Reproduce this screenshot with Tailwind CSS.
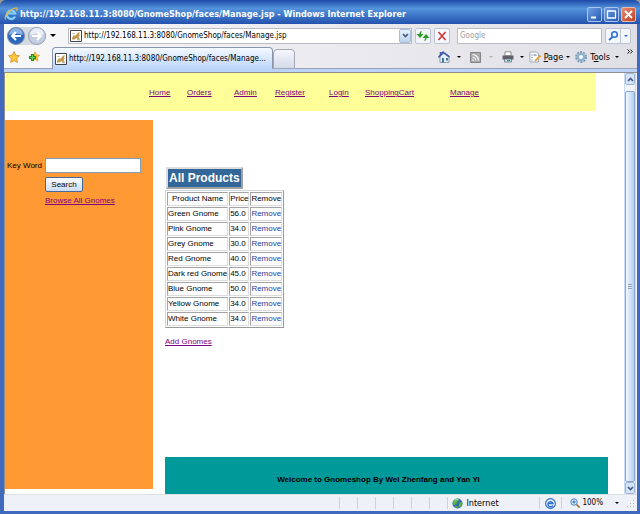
<!DOCTYPE html>
<html lang="en">
<head>
<meta charset="utf-8">
<title>GnomeShop - Manage</title>
<script src="https://cdn.jsdelivr.net/npm/@tailwindcss/browser@4"></script>
</head>
<body class="bg-[#9a9a90]">
<svg class="hidden" aria-hidden="true">
  <symbol id="gnome" viewBox="0 0 12 12">
    <path d="M.5.5h11v11H.5z" fill="#fff" stroke="#444"/>
    <path d="M2 8l2-3 1 1 4-4 .8.8-1 1.7L10 5 8.500 7 10 9.500H8L6.500 8 4.500 9.500H2.200z" fill="#c49848"/>
    <path d="M2.500 3.500h2M7 9.800h3" stroke="#a8a090" stroke-width=".8"/>
  </symbol>
  <symbol id="caret" viewBox="0 0 6 3"><path d="M0 0h6L3 3z" fill="currentColor"/></symbol>
  <symbol id="globe" viewBox="0 0 12 12">
    <circle cx="6" cy="6" r="5.500" fill="#3a68b8"/>
    <path d="M1 4Q3 .6 6.500.8L7.500 3 5 4.500 5.500 6 3 7.500 1 7zM8 5l3-1 .4 2.500L9 10 7 9.500zM3 9l2.500-.6L6 11 4 10.700z" fill="#55b545"/>
    <path d="M3 2.500Q5 1 7 2" stroke="#cdeec4" fill="none"/>
  </symbol>
</svg>
<div class="flex h-screen flex-col overflow-hidden rounded-t-md bg-[#4169bd] font-['DejaVu_Sans_Condensed','DejaVu_Sans',sans-serif] text-[9px] leading-3 text-black">
  <!-- Title bar -->
  <header class="flex h-6 shrink-0 items-center bg-linear-to-b from-[#1d49a6] via-[#5593dc] via-35% to-[#2452ae] px-1 pt-1">
    <svg class="h-3.5 w-3.5 shrink-0" viewBox="0 0 14 14">
      <path d="M11 9.500A4.200 4.200 0 1 1 11.200 6.500H4.500" fill="none" stroke="#83d3f8" stroke-width="2.200"/>
      <path d="M1.800 12.500Q-.2 10 4 5.500T12.500 1Q14 1.800 12.500 4" fill="none" stroke="#f2b632" stroke-width="1.200"/>
    </svg>
    <h1 class="ml-0.5 flex-1 truncate text-[9px] font-bold leading-4 text-white">http://192.168.11.3:8080/GnomeShop/faces/Manage.jsp - Windows Internet Explorer</h1>
    <div class="flex gap-0.5">
      <button aria-label="Minimize" class="h-[15px] w-[15px] rounded-xs border border-[#a9c5ee] bg-linear-to-br from-[#6f9ee2] to-[#2758b3]"><svg viewBox="0 0 13 13"><path d="M3 9.500h5" stroke="#fff" stroke-width="2"/></svg></button>
      <button aria-label="Maximize" class="h-[15px] w-[15px] rounded-xs border border-[#a9c5ee] bg-linear-to-br from-[#6f9ee2] to-[#2758b3]"><svg viewBox="0 0 13 13"><path d="M2.500 3v7h8V3M2 3h9" fill="none" stroke="#fff" stroke-width="1.300"/></svg></button>
      <button aria-label="Close" class="h-[15px] w-[15px] rounded-xs border border-[#e9b9ae] bg-linear-to-br from-[#e38a70] to-[#c0401c]"><svg viewBox="0 0 13 13"><path d="M3 3l7 7M10 3l-7 7" stroke="#fff" stroke-width="1.800"/></svg></button>
    </div>
  </header>
  <div class="mr-[3px] mb-[3px] ml-1 flex min-h-0 flex-1 flex-col bg-white">
    <!-- Navigation row -->
    <div class="flex h-[23px] shrink-0 items-center bg-linear-to-r from-[#f8f8f9] to-[#dfdfe6] pr-1.5 pl-[3px]">
      <div class="flex h-[18px] items-center gap-[3px] rounded-full bg-[#d5d9e2]">
        <button aria-label="Back" class="h-[18px] w-[18px]"><svg viewBox="0 0 18 18"><circle cx="9" cy="9" r="8.500" fill="#2b67bd" stroke="#8090ae"/><path d="M2 8a7 7 0 0 1 14 0q-7-3-14 0" fill="#8eb3e5"/><path d="M14 9H5m4-4L5 9l4 4" fill="none" stroke="#fff" stroke-width="2"/></svg></button>
        <button aria-label="Forward" class="h-[18px] w-[18px]"><svg viewBox="0 0 18 18"><circle cx="9" cy="9" r="8.500" fill="#c3cfe0" stroke="#949fb5"/><path d="M2 8a7 7 0 0 1 14 0q-7-3-14 0" fill="#e9eef6"/><path d="M4 9h9M9 5l4 4-4 4" fill="none" stroke="#fff" stroke-width="2"/></svg></button>
      </div>
      <button aria-label="Recent pages" class="ml-1 w-[6px]"><svg class="h-[3px] w-[6px]"><use href="#caret"/></svg></button>
      <form class="ml-3 flex h-4 flex-1 items-center border border-[#b9bcc4] bg-white pl-px">
        <svg class="h-3 w-3 shrink-0"><use href="#gnome"/></svg>
        <input aria-label="Address" value="http://192.168.11.3:8080/GnomeShop/faces/Manage.jsp" class="ml-0.5 min-w-0 flex-1 text-[8px] outline-none">
        <button type="button" aria-label="Address history" class="flex h-[14px] w-3 items-center justify-center rounded-xs border border-[#a8bedb] bg-linear-to-b from-[#e8f2fd] to-[#bcd2ef]"><svg class="h-[5px] w-[7px]" viewBox="0 0 7 5"><path d="M1 1l2.500 2.500L6 1" fill="none" stroke="#465a7d" stroke-width="1.700"/></svg></button>
      </form>
      <button aria-label="Refresh" class="ml-[3px] h-4 w-4 rounded-xs border border-[#bcc3d2] bg-[#f3f6fa]"><svg viewBox="0 0 14 14"><path d="M5.500 2.500Q4 3 4 5v2M1.800 5.500L4 8l2.200-2.500zM8.500 11.500q1.500-.5 1.500-2.500V7M7.800 8.500L10 6l2.200 2.500z" fill="#2d9b25" fill-rule="evenodd" stroke="#2d9b25" stroke-width="1.200"/></svg></button>
      <button aria-label="Stop" class="ml-[3px] h-4 w-4 rounded-xs border border-[#bcc3d2] bg-[#f3f6fa]"><svg viewBox="0 0 14 14"><path d="M3.500 3l7 8M10.500 3l-7 8" stroke="#d13536" stroke-width="1.600"/></svg></button>
      <input aria-label="Web search" placeholder="Google" class="ml-[7px] h-4 w-[145px] border border-[#b9bcc4] bg-white px-0.5 text-[8px] outline-none placeholder:text-[#9d9d9d]">
      <div class="ml-[3px] flex h-4 w-[26px] rounded-xs border border-[#bcc3d2] bg-[#f3f6fa]">
        <button aria-label="Run search" class="flex-1 border-r border-[#bcc3d2]"><svg class="h-[14px] w-[14px]" viewBox="0 0 14 14"><circle cx="8.500" cy="5.500" r="2.800" fill="#eef7ff" stroke="#2c6cd8" stroke-width="1.500"/><path d="M6.500 8L3 11" stroke="#2c6cd8" stroke-width="1.800"/></svg></button>
        <button aria-label="Search options" class="flex w-[9px] items-center justify-center text-[#2a6ade]"><svg class="h-[2px] w-1"><use href="#caret"/></svg></button>
      </div>
    </div>
    <!-- Tab row and command bar -->
    <div class="flex h-[22px] shrink-0 items-end bg-linear-to-r from-[#f8f8f9] to-[#dfdfe6]">
      <div class="flex h-full w-12 items-center gap-2 border-b border-[#9ca3b2] pb-0.5 pl-1">
        <button aria-label="Favorites" class="w-3"><svg viewBox="0 0 12 12"><path d="M6 .6l1.700 3.600 3.800.6-2.800 2.700.7 4L6 9.500l-3.400 2 .7-4L.5 4.800l3.800-.6z" fill="#fdc53a" stroke="#cf8d1f" stroke-width=".8"/></svg></button>
        <button aria-label="Add to favorites" class="w-3"><svg viewBox="0 0 12 12"><path d="M7 .8l1.400 3 3.200.5-2.300 2.300.5 3.300L7 8.400 4 10z" fill="#fdc53a" stroke="#d99a2b" stroke-width=".7"/><path d="M4.500 3v7M1 6.500h7" stroke="#238b22" stroke-width="3.200"/><path d="M4.500 4v5M2 6.500h5" stroke="#69cf5c" stroke-width="1.200"/></svg></button>
      </div>
      <div class="flex h-[22px] w-[221px] items-center gap-0.5 rounded-t-sm border border-b-0 border-[#8b96ab] bg-linear-to-b from-[#f4f9ff] to-[#bcd6fa] pr-1 pl-0.5 text-[8px]">
        <svg class="h-3 w-3 shrink-0"><use href="#gnome"/></svg>
        <span class="whitespace-nowrap">http://192.168.11.3:8080/GnomeShop/faces/Manage...</span>
      </div>
      <button aria-label="New tab" class="h-5 w-[22px] rounded-t-sm border border-[#a0a6b6] bg-linear-to-b from-[#f5f7fd] to-[#d5daea]"></button>
      <div class="flex h-full flex-1 items-center justify-end border-b border-[#9ca3b2] pb-px">
        <button aria-label="Home" class="mr-[7px] w-3"><svg viewBox="0 0 12 12"><path d="M2 5.500L6.500 2 11 5.500v6H2z" fill="#e6edf5" stroke="#75849a" stroke-width=".8"/><path d="M.5 6.500L5 1.200 11.500 6M2.500 1v2.500" fill="none" stroke="#4259ab" stroke-width="1.600"/><path d="M4 11.500V7h2v4.500M8 7h2v2.500H8z" fill="#3c7898"/></svg></button>
        <svg class="mr-[9px] h-[2px] w-1"><use href="#caret"/></svg>
        <button aria-label="Feeds" class="mr-2 w-[11px]"><svg viewBox="0 0 11 11"><path d="M.5.500h10v10H.5z" fill="#aaa" stroke="#858585"/><path d="M2.500 2.500a6 6 0 0 1 6 6M2.500 5.300a3.200 3.200 0 0 1 3.200 3.200" fill="none" stroke="#fff" stroke-width="1.100"/><circle cx="3" cy="8" r=".8" fill="#fff"/></svg></button>
        <svg class="mr-[9px] h-[2px] w-1 text-[#b8b4a8]"><use href="#caret"/></svg>
        <button aria-label="Print" class="mr-1.5 w-3"><svg viewBox="0 0 12 12"><path d="M3 .8h6v4H3z" fill="#fff" stroke="#777" stroke-width=".8"/><path d="M.5 4.500h11v4H.5z" fill="#606268"/><path d="M2.500 8h7v3h-7z" fill="#c8e4f0" stroke="#606268" stroke-width=".7"/><path d="M5 9.500h3" stroke="#1c97b6"/></svg></button>
        <svg class="mr-[5px] h-[2px] w-1"><use href="#caret"/></svg>
        <button class="mr-[3px] flex items-center gap-[3px]"><svg class="h-3 w-3" viewBox="0 0 12 12"><path d="M1 1h6.500l2 2v8H1z" fill="#fff" stroke="#8c97a8" stroke-width=".8"/><path d="M2.500 4h1M4.500 4h3M2.500 6.500h1M2.500 9h1" stroke="#50709c"/><path d="M11.500 4.500L6 10" stroke="#e5a23c" stroke-width="1.800"/></svg><span><u>P</u>age</span></button>
        <svg class="mr-[5px] h-[2px] w-1"><use href="#caret"/></svg>
        <button class="mr-[5px] flex items-center gap-[3px]"><svg class="h-3 w-3" viewBox="0 0 12 12"><circle cx="6" cy="6" r="5" fill="none" stroke="#7896b1" stroke-width="1.800" stroke-dasharray="2 1.140"/><circle cx="6" cy="6" r="3.200" fill="#f2f8fc" stroke="#90b1cc" stroke-width="2.200"/></svg><span>T<u>o</u>ols</span></button>
        <svg class="mr-2 h-[2px] w-1"><use href="#caret"/></svg>
        <button aria-label="More commands" class="mr-1 self-start pt-0.5"><svg class="h-[6px] w-[6px]" viewBox="0 0 6 6"><path d="M.5.500L2.500 2.500.500 4.500M3.300.500l2 2-2 2" fill="none" stroke="#111"/></svg></button>
      </div>
    </div>
    <div class="h-1 shrink-0 border-b border-[#8f8f8b] bg-[#bad3f7]"></div>
    <!-- Page viewport -->
    <div class="flex min-h-0 flex-1 border-l border-[#8f8f8b]">
      <div class="flex min-w-0 flex-1 flex-col overflow-hidden font-['Liberation_Sans',sans-serif] text-[8px] leading-[10px]">
        <nav class="mr-7 grid h-[38px] shrink-0 grid-cols-[38px_47px_41px_54px_36px_85px_auto] items-center bg-[#ffff99] pt-0.5 pl-36 text-[#800080] underline">
          <a href="#">Home</a><a href="#">Orders</a><a href="#">Admin</a><a href="#">Register</a><a href="#">Login</a><a href="#">ShoppingCart</a><a href="#">Manage</a>
        </nav>
        <div class="flex min-h-0 flex-1 gap-3 pt-[9px]">
          <aside class="mb-[5px] w-[148px] shrink-0 bg-[#ff9933] pt-[38px] pl-0.5">
            <form class="grid grid-cols-[38px_96px] items-center gap-y-1">
              <label for="kw">Key Word</label>
              <input id="kw" class="h-[15px] border border-[#7f9db9] bg-white px-0.5 outline-none">
              <button type="button" class="col-start-2 h-[15px] w-[38px] rounded-xs border border-[#47699a] bg-linear-to-b from-white to-[#ccdaf2]">Search</button>
              <a href="#" class="col-start-2 text-[#800080] underline">Browse All Gnomes</a>
            </form>
          </aside>
          <main class="flex min-w-0 flex-1 flex-col items-start">
            <h2 class="mt-[47px] ml-px border-2 border-t-[#dcdcdc] border-r-[#a0a0a0] border-b-[#a0a0a0] border-l-[#dcdcdc] bg-[#336699] px-px text-[12px] font-bold leading-[18px] text-white">All Products</h2>
            <table class="mt-px border-separate border-spacing-px border border-t-[#d4d4d4] border-r-[#999] border-b-[#999] border-l-[#d4d4d4] text-left leading-3 [&_a]:text-[#1a3f9c] [&_td]:border [&_td]:border-t-[#a4a4a4] [&_td]:border-r-[#dcdcdc] [&_td]:border-b-[#dcdcdc] [&_td]:border-l-[#a4a4a4] [&_td]:p-0 [&_th]:border [&_th]:border-t-[#a4a4a4] [&_th]:border-r-[#dcdcdc] [&_th]:border-b-[#dcdcdc] [&_th]:border-l-[#a4a4a4] [&_th]:p-0 [&_th]:font-normal">
              <thead><tr><th class="text-center">Product Name</th><th>Price</th><th>Remove</th></tr></thead>
              <tbody>
                <tr><td>Green Gnome</td><td>56.0</td><td><a href="#">Remove</a></td></tr>
                <tr><td>Pink Gnome</td><td>34.0</td><td><a href="#">Remove</a></td></tr>
                <tr><td>Grey Gnome</td><td>30.0</td><td><a href="#">Remove</a></td></tr>
                <tr><td>Red Gnome</td><td>40.0</td><td><a href="#">Remove</a></td></tr>
                <tr><td>Dark red Gnome</td><td>45.0</td><td><a href="#">Remove</a></td></tr>
                <tr><td>Blue Gnome</td><td>50.0</td><td><a href="#">Remove</a></td></tr>
                <tr><td>Yellow Gnome</td><td>34.0</td><td><a href="#">Remove</a></td></tr>
                <tr><td>White Gnome</td><td>34.0</td><td><a href="#">Remove</a></td></tr>
              </tbody>
            </table>
            <a href="#" class="mt-[9px] text-[#800080] underline">Add Gnomes</a>
            <footer class="mt-auto mr-4 h-[37px] self-stretch bg-[#009999] pt-[18px] pr-4 text-center font-bold">Welcome to Gnomeshop By Wei Zhenfang and Yan Yi</footer>
          </main>
        </div>
      </div>
      <!-- Vertical scrollbar -->
      <div class="flex w-3 shrink-0 flex-col border-x border-[#c9dbf2] bg-[#f2f5fb]">
        <button aria-label="Scroll up" class="flex h-3 items-center justify-center rounded-xs border border-[#9fb6d8] bg-[#d5e3f8]"><svg class="h-[5px] w-[7px]" viewBox="0 0 7 5"><path d="M1 4l2.500-2.500L6 4" fill="none" stroke="#465a7d" stroke-width="1.700"/></svg></button>
        <div class="mt-1.5 flex flex-1 items-center justify-center rounded-xs border border-[#8ba6cf] bg-linear-to-r from-[#f1f7ff] to-[#b7cff2]"><div class="h-[6px] w-1 bg-[repeating-linear-gradient(#91a3be_0_1px,#dce8f8_1px_2px)]"></div></div>
        <button aria-label="Scroll down" class="flex h-3 items-center justify-center rounded-xs border border-[#9fb6d8] bg-[#d5e3f8]"><svg class="h-[5px] w-[7px]" viewBox="0 0 7 5"><path d="M1 1l2.500 2.500L6 1" fill="none" stroke="#465a7d" stroke-width="1.700"/></svg></button>
      </div>
      <div class="w-px bg-[#f4f4f4]"></div>
    </div>
    <!-- Status bar -->
    <footer class="flex h-[17px] shrink-0 items-center justify-end border-t border-[#dedfe3] bg-[#eef1f7]">
      <div class="flex h-3"><i class="w-[18px] border-l border-[#d0d2d8]"></i><i class="w-[18px] border-l border-[#d0d2d8]"></i><i class="w-[18px] border-l border-[#d0d2d8]"></i><i class="w-[18px] border-l border-[#d0d2d8]"></i><i class="w-[18px] border-l border-[#d0d2d8]"></i><i class="w-[18px] border-l border-[#d0d2d8]"></i></div>
      <div class="flex h-3 w-[92px] items-center gap-[3px] border-l border-[#d0d2d8] pl-1"><svg class="h-[11px] w-[11px]"><use href="#globe"/></svg>Internet</div>
      <div class="flex h-3 w-[23px] items-center justify-center border-x border-[#d0d2d8]"><svg class="h-[11px] w-[11px]" viewBox="0 0 12 12"><circle cx="6" cy="6" r="5.300" fill="#f2f6fb" stroke="#2865c4" stroke-width="1.200"/><path d="M8.500 8A2.800 2.800 0 1 1 8.700 6H3.500" fill="none" stroke="#2d6fd4" stroke-width="1.500"/></svg></div>
      <button class="flex items-center gap-0.5 pl-2 text-[8px]"><svg class="h-[10px] w-[10px]" viewBox="0 0 10 10"><circle cx="4" cy="4" r="3.200" fill="#dff1ff" stroke="#4c82c8"/><path d="M4 2.300v3.400M2.300 4h3.400" stroke="#2a62b4"/><path d="M6.500 6.500l3 3" stroke="#9a6a35" stroke-width="1.600"/></svg>100%<svg class="mr-[7px] ml-2.5 h-[2px] w-1"><use href="#caret"/></svg></button>
      <svg class="mr-0.5 h-[9px] w-[9px]" viewBox="0 0 9 9"><path d="M7 1h1v1H7zM4 4h1v1H4zM7 4h1v1H7zM1 7h1v1H1zM4 7h1v1H4zM7 7h1v1H7z" fill="#b6b8be"/></svg>
    </footer>
  </div>
</div>
</body>
</html>
